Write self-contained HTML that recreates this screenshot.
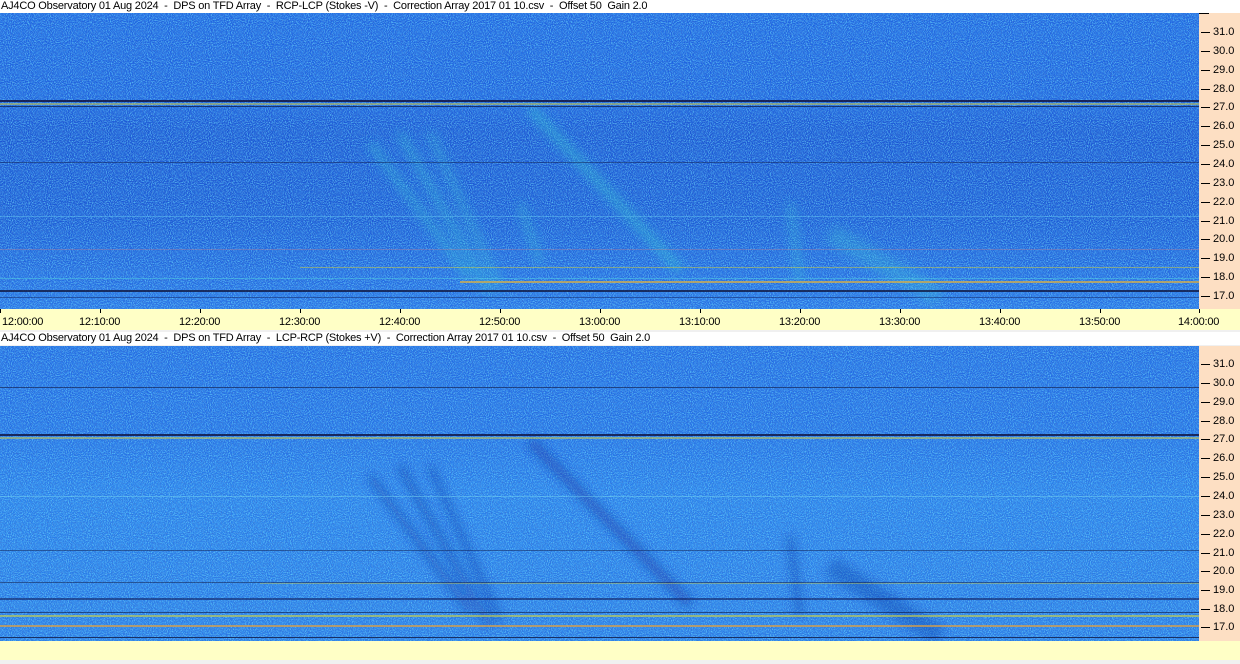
<!DOCTYPE html>
<html><head><meta charset="utf-8"><style>
html,body{margin:0;padding:0;width:1240px;height:664px;overflow:hidden;background:#f0f0f0;font-family:"Liberation Sans",sans-serif;}
.abs{position:absolute}
.title{position:absolute;left:0;width:1240px;height:13px;background:#fff;font-size:11px;line-height:13px;color:#000;white-space:pre;padding-left:1px;letter-spacing:-0.2px;}
.rp{position:absolute;left:1199px;width:41px;background:#fddfc3;}
.fl{position:absolute;left:1201px;font-size:11px;line-height:11px;color:#000;}
.fl:before{content:"";display:inline-block;width:9px;height:1px;background:#000;vertical-align:middle;margin-right:3px;}
.tax{position:absolute;left:0;width:1240px;background:#ffffc6;}
.tl{position:absolute;top:316px;font-size:11px;line-height:12px;color:#000;letter-spacing:-0.2px;}
.tk{position:absolute;top:309px;width:1px;height:4px;background:#000;}
</style></head><body>
<div class="title" style="top:0">AJ4CO Observatory 01 Aug 2024  -  DPS on TFD Array  -  RCP-LCP (Stokes -V)  -  Correction Array 2017 01 10.csv  -  Offset 50  Gain 2.0</div>
<div class="rp" style="top:13px;height:296px"></div>
<div class="rp" style="top:346px;height:295px"></div>
<div class="abs" style="left:1199px;top:13px;width:10px;height:1px;background:#000"></div>

<svg class="abs" style="left:0;top:13px" width="1199" height="296">
<defs>
<filter id="n" x="0" y="0" width="100%" height="100%"><feTurbulence type="fractalNoise" baseFrequency="0.95" numOctaves="1" seed="3"/><feColorMatrix type="matrix" values="0 0 0 0 0.15  0 0 0 0 0.7  0 0 0 0 1  0 0 0 2.2 -0.9"/></filter>
<filter id="nd" x="0" y="0" width="100%" height="100%"><feTurbulence type="fractalNoise" baseFrequency="0.8" numOctaves="1" seed="9"/><feColorMatrix type="matrix" values="0 0 0 0 0.05  0 0 0 0 0.15  0 0 0 0 0.6  0 0 0 2 -0.95"/></filter>
<filter id="b"><feGaussianBlur stdDeviation="5"/></filter>
<linearGradient id="g1" x1="0" y1="0" x2="0" y2="1">
<stop offset="0" stop-color="#1f66e2"/><stop offset="0.28" stop-color="#1e62df"/><stop offset="0.4" stop-color="#1a56d4"/><stop offset="0.7" stop-color="#1b5ad6"/><stop offset="1" stop-color="#2874e8"/></linearGradient>
</defs>
<rect width="1199" height="296" fill="url(#g1)"/>
<rect width="1199" height="296" filter="url(#n)"/>
<rect width="1199" height="296" filter="url(#nd)"/>
<g filter="url(#b)" stroke="#3ad0d0" stroke-opacity="0.4" fill="none">
<path d="M530 95 L680 257" stroke-width="10"/>
<path d="M370 130 L470 265" stroke-width="7"/>
<path d="M400 120 L490 280" stroke-width="7"/>
<path d="M430 120 L500 275" stroke-width="6"/>
<path d="M520 190 L540 250" stroke-width="6"/>
<path d="M790 190 L800 270" stroke-width="6"/>
<path d="M830 220 L940 285" stroke-width="20" stroke-opacity="0.25"/>
</g>
<rect y="87" width="1199" height="2" fill="#10103a" opacity="0.8"/>
<rect y="90" width="1199" height="2" fill="#d8d040" opacity="0.5"/>
<rect y="93" width="1199" height="1" fill="#101840" opacity="0.7"/>
<rect y="149" width="1199" height="1" fill="#102050" opacity="0.5"/>
<rect y="203" width="1199" height="1" fill="#60c0f0" opacity="0.5"/>
<rect y="236" width="1199" height="1" fill="#e08080" opacity="0.3"/>
<rect x="300" y="254" width="900" height="1" fill="#d0d040" opacity="0.5"/>
<rect y="265" width="1199" height="1" fill="#50d0e0" opacity="0.5"/>
<rect x="460" y="268" width="740" height="2" fill="#e0b040" opacity="0.7"/>
<rect y="277" width="1199" height="2" fill="#101840" opacity="0.8"/>
<rect y="284" width="1199" height="1" fill="#102060" opacity="0.5"/>
</svg>

<div class="tax" style="top:309px;height:21px"></div>
<div class="tk" style="left:0"></div><div class="tk" style="left:100px"></div><div class="tk" style="left:200px"></div><div class="tk" style="left:300px"></div><div class="tk" style="left:400px"></div><div class="tk" style="left:500px"></div><div class="tk" style="left:600px"></div><div class="tk" style="left:700px"></div><div class="tk" style="left:800px"></div><div class="tk" style="left:900px"></div><div class="tk" style="left:1000px"></div><div class="tk" style="left:1100px"></div><div class="tk" style="left:1199px"></div>
<div class="tl" style="left:2px">12:00:00</div>
<div class="tl" style="left:79px">12:10:00</div>
<div class="tl" style="left:179px">12:20:00</div>
<div class="tl" style="left:279px">12:30:00</div>
<div class="tl" style="left:379px">12:40:00</div>
<div class="tl" style="left:479px">12:50:00</div>
<div class="tl" style="left:579px">13:00:00</div>
<div class="tl" style="left:679px">13:10:00</div>
<div class="tl" style="left:779px">13:20:00</div>
<div class="tl" style="left:879px">13:30:00</div>
<div class="tl" style="left:979px">13:40:00</div>
<div class="tl" style="left:1079px">13:50:00</div>
<div class="tl" style="left:1178px">14:00:00</div>

<div class="title" style="top:332px">AJ4CO Observatory 01 Aug 2024  -  DPS on TFD Array  -  LCP-RCP (Stokes +V)  -  Correction Array 2017 01 10.csv  -  Offset 50  Gain 2.0</div>

<svg class="abs" style="left:0;top:346px" width="1199" height="295">
<defs>
<linearGradient id="g2" x1="0" y1="0" x2="0" y2="1">
<stop offset="0" stop-color="#236ce4"/><stop offset="0.3" stop-color="#2470e6"/><stop offset="0.5" stop-color="#2a80ec"/><stop offset="1" stop-color="#2a7ce8"/></linearGradient>
<filter id="b2"><feGaussianBlur stdDeviation="5"/></filter>
</defs>
<rect width="1199" height="295" fill="url(#g2)"/>
<rect width="1199" height="295" filter="url(#n)"/>
<rect width="1199" height="295" filter="url(#nd)"/>
<g filter="url(#b2)" stroke="#102c9a" stroke-opacity="0.45" fill="none">
<path d="M530 95 L690 258" stroke-width="10"/>
<path d="M370 130 L470 265" stroke-width="7"/>
<path d="M400 120 L490 280" stroke-width="7"/>
<path d="M430 120 L500 275" stroke-width="6"/>
<path d="M790 190 L800 270" stroke-width="6"/>
<path d="M830 220 L940 290" stroke-width="20" stroke-opacity="0.3"/>
</g>
<rect y="41" width="1199" height="1" fill="#101840" opacity="0.6"/>
<rect y="88" width="1199" height="2" fill="#10103a" opacity="0.8"/>
<rect y="91" width="1199" height="2" fill="#d8d040" opacity="0.5"/>
<rect y="150" width="1199" height="1" fill="#70d0f0" opacity="0.5"/>
<rect y="204" width="1199" height="1" fill="#102050" opacity="0.5"/>
<rect y="236" width="1199" height="1" fill="#101840" opacity="0.5"/>
<rect x="260" y="237" width="940" height="1" fill="#d0d040" opacity="0.4"/>
<rect y="252" width="1199" height="2" fill="#102060" opacity="0.6"/>
<rect y="266" width="1199" height="1" fill="#101840" opacity="0.6"/>
<rect y="269" width="1199" height="2" fill="#d0d040" opacity="0.6"/>
<rect y="279" width="1199" height="2" fill="#e0a040" opacity="0.7"/>
<rect y="291" width="1199" height="1" fill="#101840" opacity="0.8"/>
</svg>

<div class="tax" style="top:641px;height:19px"></div>

<div class="fl" style="top:27px">31.0</div>
<div class="fl" style="top:46px">30.0</div>
<div class="fl" style="top:65px">29.0</div>
<div class="fl" style="top:84px">28.0</div>
<div class="fl" style="top:102px">27.0</div>
<div class="fl" style="top:121px">26.0</div>
<div class="fl" style="top:140px">25.0</div>
<div class="fl" style="top:159px">24.0</div>
<div class="fl" style="top:178px">23.0</div>
<div class="fl" style="top:197px">22.0</div>
<div class="fl" style="top:216px">21.0</div>
<div class="fl" style="top:234px">20.0</div>
<div class="fl" style="top:253px">19.0</div>
<div class="fl" style="top:272px">18.0</div>
<div class="fl" style="top:291px">17.0</div>

<div class="fl" style="top:359px">31.0</div>
<div class="fl" style="top:378px">30.0</div>
<div class="fl" style="top:397px">29.0</div>
<div class="fl" style="top:416px">28.0</div>
<div class="fl" style="top:434px">27.0</div>
<div class="fl" style="top:453px">26.0</div>
<div class="fl" style="top:472px">25.0</div>
<div class="fl" style="top:491px">24.0</div>
<div class="fl" style="top:510px">23.0</div>
<div class="fl" style="top:529px">22.0</div>
<div class="fl" style="top:548px">21.0</div>
<div class="fl" style="top:566px">20.0</div>
<div class="fl" style="top:585px">19.0</div>
<div class="fl" style="top:604px">18.0</div>
<div class="fl" style="top:622px">17.0</div>
</body></html>
